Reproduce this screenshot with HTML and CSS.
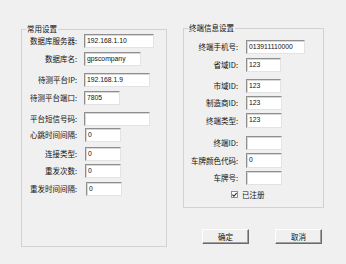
FILE: index.html
```html
<!doctype html>
<html>
<head>
<meta charset="utf-8">
<title>参数设置</title>
<link rel="stylesheet" href="styles.css">
</head>
<body>
<div class="dlg">
    <fieldset class="grp grp-common">
        <legend>常用设置</legend>
        <div class="row"><label>数据库服务器:</label><span class="edit w70">192.168.1.10</span></div>
        <div class="row"><label>数据库名:</label><span class="edit w57">gpscompany</span></div>
        <div class="row loose"><label>待测平台IP:</label><span class="edit w66">192.168.1.9</span></div>
        <div class="row"><label>待测平台端口:</label><span class="edit w36">7805</span></div>
        <div class="row loose"><label>平台短信号码:</label><span class="edit w66"></span></div>
        <div class="row tight"><label>心跳时间间隔:</label><span class="edit w36 sh1">0</span></div>
        <div class="row mid"><label>连接类型:</label><span class="edit w36 sh1">0</span></div>
        <div class="row near"><label>重发次数:</label><span class="edit w36 sh1">0</span></div>
        <div class="row"><label>重发时间间隔:</label><span class="edit w36 sh2">0</span></div>
    </fieldset>

    <div class="side">
        <fieldset class="grp grp-term">
            <legend>终端信息设置</legend>
            <div class="row"><label>终端手机号:</label><span class="edit w59">013911110000</span></div>
            <div class="row"><label>省域ID:</label><span class="edit w35">123</span></div>
            <div class="row loose"><label>市域ID:</label><span class="edit w35">123</span></div>
            <div class="row near"><label>制造商ID:</label><span class="edit w36">123</span></div>
            <div class="row near tall"><label>终端类型:</label><span class="edit w36">123</span></div>
            <div class="row far"><label>终端ID:</label><span class="edit w36"></span></div>
            <div class="row near tall"><label>车牌颜色代码:</label><span class="edit w36">0</span></div>
            <div class="row near"><label>车牌号:</label><span class="edit w36"></span></div>
            <div class="check">
                <span class="box"><svg width="6" height="6" viewBox="0 0 6 6"><path d="M0.5 2.5 L2.3 4.5 L5.5 0.8" fill="none" stroke="#222" stroke-width="1.3"/></svg></span>
                <span>已注册</span>
            </div>
        </fieldset>
        <div class="buttons">
            <a href="javascript:" class="btn">确定</a>
            <a href="javascript:" class="btn">取消</a>
        </div>
    </div>
</div>
</body>
</html>
```

FILE: styles.css
```css
body { margin: 0; background-color: #f0f0f0; font: 7.5px/10px "Noto Sans CJK SC", "Liberation Sans", sans-serif; color: #111; }
.dlg { display: flex; align-items: flex-start; padding: 24px 0 0 21px; }
.grp { margin: 0; padding: 0; border: 1px solid #d2d2d2; box-sizing: border-box; min-width: 0; }
.grp legend { padding: 0 1px; margin-left: 4px; line-height: 10px; }
.grp-common { width: 146px; height: 223px; }
.grp-common label { width: 55px; }
.grp-common .edit { margin-left: 7px; }
.side { margin: -1px 0 0 16px; }
.grp-term { width: 141px; height: 185px; padding-top: 7px; }
.grp-term label { width: 54px; }
.grp-term .edit { margin-left: 8px; }

.row { display: flex; align-items: center; height: 14px; margin-top: 4px; }
.row:first-of-type { margin-top: 0; }
.row.loose { margin-top: 7px; }
.row.far { margin-top: 8px; }
.row.mid { margin-top: 5px; }
.row.near { margin-top: 3px; }
.row.tight { margin-top: 2px; }
.row.tall { height: 15px; }
.row label { text-align: right; white-space: nowrap; }

.edit { display: block; height: 100%; box-sizing: border-box; padding: 1px 2px 0; background-color: #fff; border: 1px solid; border-color: #8e8e8e #e3e3e3 #e3e3e3 #8e8e8e; box-shadow: inset 1px 1px 0 #d8d8d8; font: 6.8px/10px "Liberation Sans", sans-serif; color: #111; white-space: nowrap; overflow: hidden; }
.grp-common .edit.sh1 { margin-left: 8px; }
.grp-common .edit.sh2 { margin-left: 9px; }
.w35 { width: 35px; }
.w36 { width: 36px; }
.w57 { width: 57px; }
.w59 { width: 59px; }
.w66 { width: 66px; }
.w70 { width: 70px; }

.check { display: flex; align-items: center; margin: 5px 0 0 47px; height: 9px; }
.check .box { display: flex; align-items: center; justify-content: center; width: 7px; height: 7px; box-sizing: border-box; background-color: #fff; border: 1px solid #8e8e8e; margin-right: 4px; }

.buttons { display: flex; gap: 26px; margin: 21px 0 0 19px; }
.btn { display: block; width: 47px; height: 15px; box-sizing: border-box; border: 1px solid; border-color: #fff #6a6a6a #6a6a6a #fff; box-shadow: inset -1px -1px 0 #a0a0a0; background-color: #f0f0f0; text-align: center; line-height: 13px; color: #111; text-decoration: none; }
```
